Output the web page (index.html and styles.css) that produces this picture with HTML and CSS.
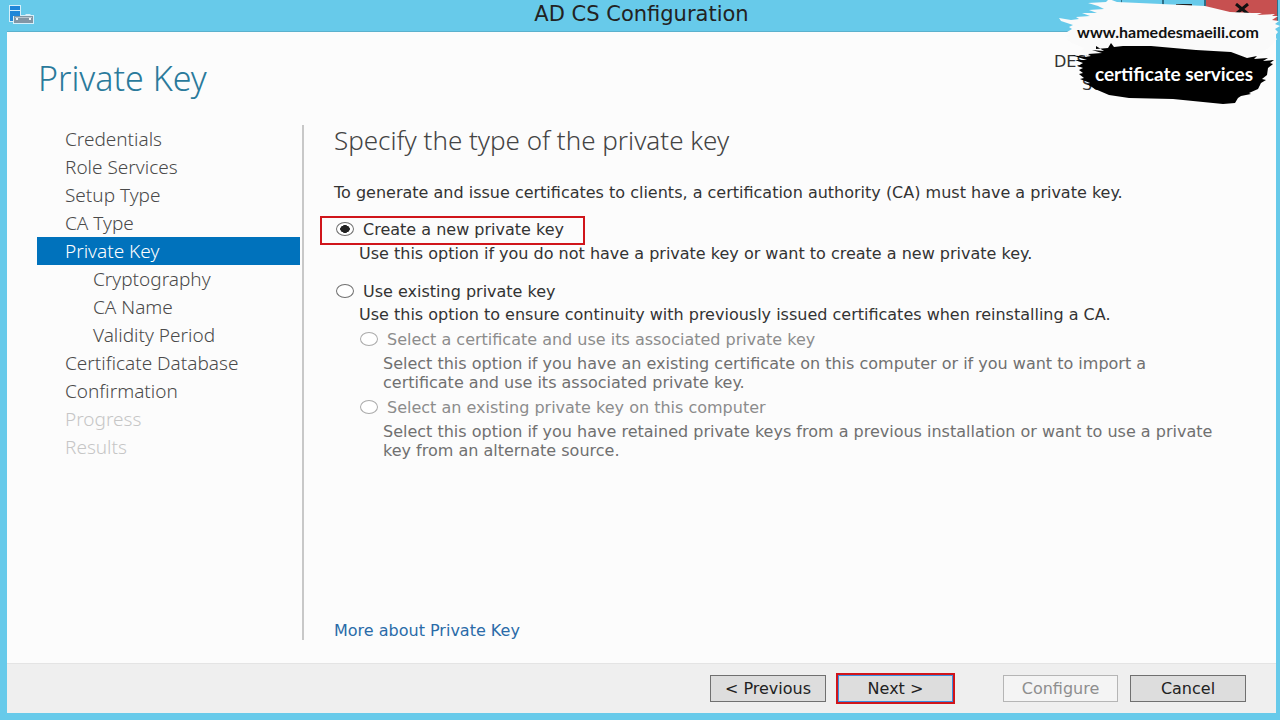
FILE: index.html
```
<!DOCTYPE html>
<html lang="en">
  <head>
    <meta charset="UTF-8" />
    <meta name="viewport" content="width=device-width, initial-scale=1.0" />
    <title>AD CS Configuration</title>
    <link rel="stylesheet" href="styles.css">
  </head>
  <body>
    <div class="titlebar">
      <svg class="app-icon" viewBox="0 0 26 20" aria-hidden="true">
        <path d="M0 0h12v10h4l1-1h4l1 1h3v9H4v-2H0z" fill="#d5effa" />
        <path d="M1 1h10v4H1zM1 6h10v5H4v5H1z" fill="#1f86d8" />
        <path d="M5 11h19v7H5z" fill="#8296a5" />
        <path d="M6 12h17v1H6z" fill="#b9c6cf" />
        <path d="M7 13h2v2H7zM20 13h2v2h-2z" fill="#eef3f6" />
      </svg>
      <h1 class="titlebar-text">AD CS Configuration</h1>
      <div class="controls">
        <button class="control" aria-label="Minimize"></button>
        <button class="control" aria-label="Maximize">
          <svg viewBox="0 0 16 12" width="16" height="12"><path d="M1 2h14v9H1z" fill="none" stroke="#222" stroke-width="2" /></svg>
        </button>
        <button class="control close" aria-label="Close">
          <svg viewBox="0 0 16 12" width="16" height="12"><path d="M2 1l12 10M14 1L2 11" stroke="#111" stroke-width="3" /></svg>
        </button>
      </div>
    </div>

    <div class="window">
      <div class="header">
        <h2 class="title">Private Key</h2>
        <div class="server">
          <div>DEST</div>
          <div class="server-name">Se</div>
        </div>
      </div>

      <div class="main">
        <nav class="steps">
          <a class="step" href="#">Credentials</a>
          <a class="step" href="#">Role Services</a>
          <a class="step" href="#">Setup Type</a>
          <a class="step" href="#">CA Type</a>
          <a class="step active" href="#">Private Key</a>
          <a class="step sub" href="#">Cryptography</a>
          <a class="step sub" href="#">CA Name</a>
          <a class="step sub" href="#">Validity Period</a>
          <a class="step" href="#">Certificate Database</a>
          <a class="step" href="#">Confirmation</a>
          <a class="step disabled">Progress</a>
          <a class="step disabled">Results</a>
        </nav>

        <form class="content">
          <h3 class="subtitle">Specify the type of the private key</h3>
          <p class="intro">To generate and issue certificates to clients, a certification authority (CA) must have a private key.</p>

          <div class="option marked">
            <input type="radio" name="key" id="new" checked>
            <label for="new">Create a new private key</label>
          </div>
          <p class="hint">Use this option if you do not have a private key or want to create a new private key.</p>

          <div class="option existing">
            <input type="radio" name="key" id="existing">
            <label for="existing">Use existing private key</label>
          </div>
          <p class="hint">Use this option to ensure continuity with previously issued certificates when reinstalling a CA.</p>

          <div class="nested">
            <div class="option">
              <input type="radio" name="source" id="cert" disabled>
              <label for="cert">Select a certificate and use its associated private key</label>
            </div>
            <p class="hint">Select this option if you have an existing certificate on this computer or if you want to import a certificate and use its associated private key.</p>
            <div class="option">
              <input type="radio" name="source" id="computer" disabled>
              <label for="computer">Select an existing private key on this computer</label>
            </div>
            <p class="hint">Select this option if you have retained private keys from a previous installation or want to use a private key from an alternate source.</p>
          </div>

          <a class="more" href="#">More about Private Key</a>
        </form>
      </div>

      <div class="footer">
        <button class="button">&lt; Previous</button>
        <button class="button next">Next &gt;</button>
        <button class="button configure" disabled>Configure</button>
        <button class="button">Cancel</button>
      </div>
    </div>

    <!-- brush stroke badge over the top right corner -->
    <div class="badge">
      <svg class="brush" viewBox="0 0 260 120" aria-hidden="true">
        <path fill="#fafafa" d="M68 3l18-1 3-3 8 3 88 4 25 6 22 1 10 0-5 2 18-1-3 2 6 0-6 4 7 1-4 3 5 2-5 3 3 3-4 5 3 2-7 8-12 8-30 4-98-2-24 1-5-4-14 2-6-5 3-3-12-5-6-4 4-1-5-2 5-2-3-2 5-3-3-2 4-2-12-4-2-3 12 2 8-1-3-2 14-1-8-3 15 0-8-3 15-1-6-3z" />
        <path fill="#000" d="M76 49l12-1 3-5 3 4 9-1 28 0 45 4 35 2 16 6 10-2-3 3 14-1-5 3 11-1-4 3 3 1-5 4-1 7-5 4 4 1-5 3-3 6-9 4 2 1-10 2-3 2-3 5-12 1-50-5-44-1-20-3-14-6-8-5 3-1-10-4 4-1-5-4 4-1-4-3 4-2-5-2 5-3-8-3 12 0-16-5 15 2 5-1-3-2 14-1-10-3 12 1-8-5z" />
      </svg>
      <div class="badge-site">www.hamedesmaeili.com</div>
      <div class="badge-topic">certificate services</div>
    </div>
  </body>
</html>
```

FILE: styles.css
```
* {
  box-sizing: border-box;
}
body {
  margin: 0;
  min-height: 100vh;
  padding: 0 4px 7px 7px;
  display: flex;
  flex-direction: column;
  background: #67caea;
  color: #333;
  font-family: "DejaVu Sans", sans-serif;
  font-size: 16px;
  line-height: 18px;
  overflow-x: hidden;
}
h1, h2, h3, p {
  margin: 0;
  font-weight: 400;
}
a {
  text-decoration: none;
}
.titlebar {
  position: relative;
  height: 31px;
  display: flex;
  justify-content: center;
  align-items: flex-start;
}
.app-icon {
  position: absolute;
  left: 2px;
  top: 5px;
  width: 26px;
  height: 20px;
}
.titlebar-text {
  color: #222;
  font-size: 21px;
  line-height: 29px;
}
.controls {
  position: absolute;
  right: -2px;
  top: 0;
  display: flex;
}
.control {
  width: 42px;
  height: 22px;
  padding: 0;
  border: 1px solid #2d6f88;
  border-top: 0;
  background: #67caea;
}
.close {
  width: 73px;
  background: #c75050;
}
.window {
  flex: 1;
  display: flex;
  flex-direction: column;
  background: #fcfcfc;
  border-top: 1px solid #5bb1cd;
}
.header {
  display: flex;
  justify-content: space-between;
  padding: 18px 46px 0 31px;
  height: 93px;
}
.title {
  color: #2a7a9b;
  font-family: "Noto Sans", sans-serif;
  font-weight: 300;
  font-size: 34px;
  line-height: 56px;
}
.server {
  width: 176px;
  line-height: 23px;
}
.server-name {
  padding-left: 28px;
}
.main {
  flex: 1;
  display: flex;
  padding: 0 30px 23px 30px;
}
.steps {
  width: 267px;
  padding-right: 2px;
  border-right: 2px solid #c8c8c8;
  display: flex;
  flex-direction: column;
  flex-shrink: 0;
}
.step {
  padding: 1px 0 0 28px;
  color: #4a4a4a;
  font-family: "Noto Sans", sans-serif;
  font-weight: 300;
  font-size: 19px;
  line-height: 27px;
}
.active {
  color: #fff;
  background: #0072bc;
}
.sub {
  padding-left: 56px;
}
.disabled {
  color: #c6c6c6;
}
.content {
  flex: 1;
  display: flex;
  flex-direction: column;
  align-items: flex-start;
  padding-left: 30px;
}
.subtitle {
  color: #444;
  font-family: "Noto Sans", sans-serif;
  font-weight: 300;
  font-size: 26px;
  line-height: 30px;
}
.intro {
  margin-top: 29px;
}
.option {
  display: flex;
  align-items: center;
  gap: 9px;
  line-height: 20px;
}
.option input {
  appearance: none;
  width: 18px;
  height: 14px;
  margin: 0 0 2px;
  border: 1px solid #707070;
  border-radius: 50%;
  background: #fff;
}
.option input:checked {
  background: radial-gradient(5px 4px, #222 90%, #fff);
}
.option input:disabled {
  border-color: #aaa;
}
.marked {
  margin: 14px 0 0 -14px;
  padding: 2px 19px 3px 14px;
  border: 2px solid #d0151b;
}
.hint {
  padding-left: 25px;
}
.existing {
  margin: 19px 0 4px 2px;
}
.nested {
  padding: 0 20px 0 26px;
  color: #707070;
}
.nested .option {
  margin: 6px 0 4px;
  color: #8c8c8c;
}
.nested .hint {
  padding-left: 23px;
  line-height: 19px;
}
.more {
  margin-top: auto;
  color: #2a6ba8;
}
.footer {
  display: flex;
  justify-content: flex-end;
  align-items: center;
  height: 50px;
  padding-right: 30px;
  border-top: 1px solid #e4e4e4;
  background: #efefef;
}
.button {
  width: 116px;
  height: 27px;
  margin-left: 12px;
  padding: 0;
  border: 1px solid #707070;
  background: #dddddd;
  color: #222;
  font: inherit;
}
.next {
  width: 115px;
  border-color: #3c8ee0;
  outline: 2px solid #d0151b;
}
.configure {
  width: 115px;
  margin-left: 50px;
  border-color: #b5b5b5;
  background: #f4f4f4;
  color: #8e8e8e;
}
.badge {
  position: absolute;
  right: 0;
  top: 0;
  width: 260px;
  height: 120px;
  padding: 20px 0 0 36px;
  color: #111;
  font-family: Lato, sans-serif;
  font-weight: bold;
  text-align: center;
}
.brush {
  position: absolute;
  left: 0;
  top: 0;
  width: 260px;
  height: 120px;
}
.badge-site,
.badge-topic {
  position: relative;
  font-size: 16px;
  line-height: 24px;
}
.badge-topic {
  margin-top: 18px;
  padding-left: 12px;
  color: #fff;
  font-size: 19px;
}
```
